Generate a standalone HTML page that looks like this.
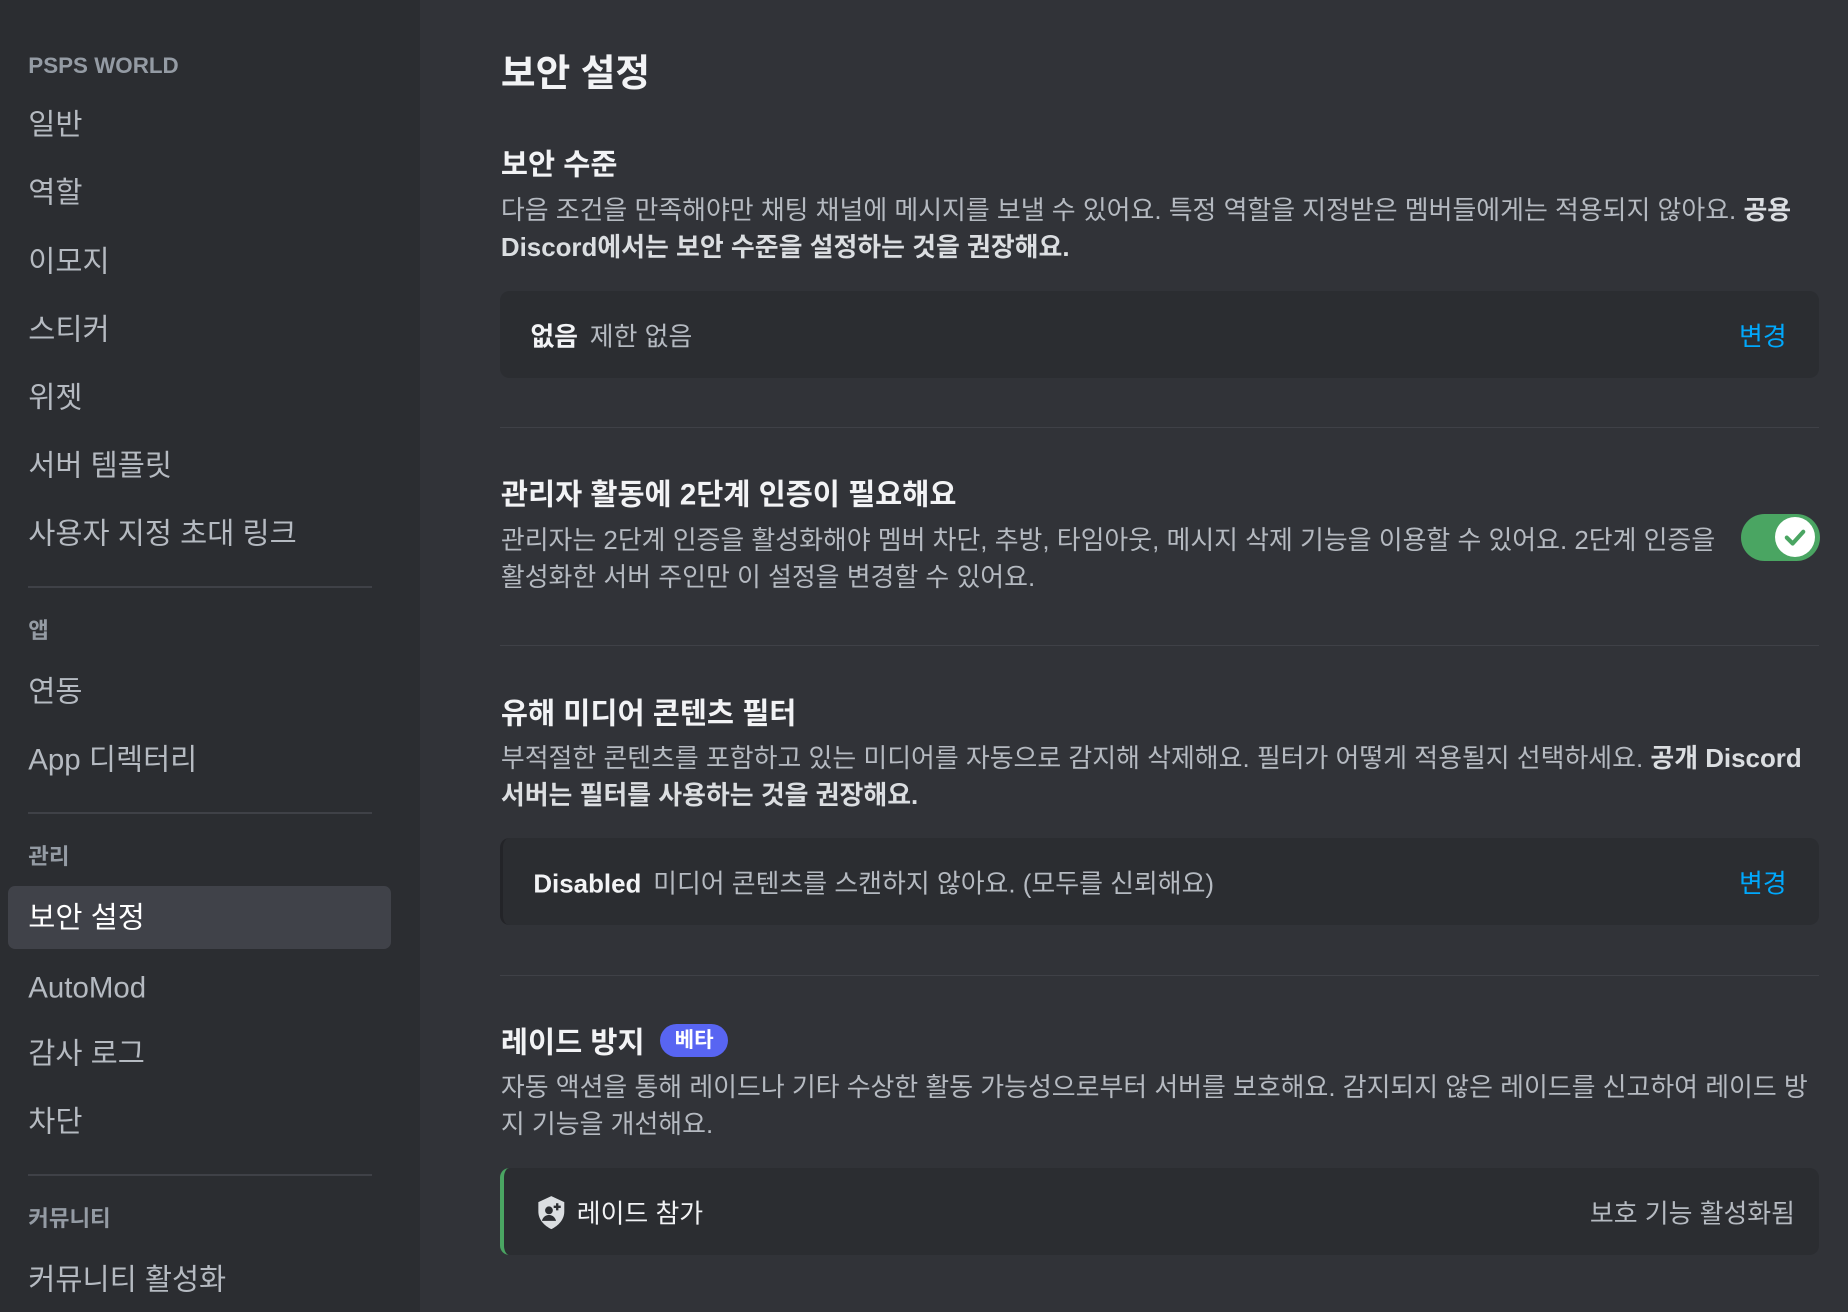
<!DOCTYPE html>
<html><head><meta charset="utf-8"><style>
html,body{margin:0;padding:0;width:1848px;height:1312px;overflow:hidden;background:#313338}
#w{zoom:1.17857;width:1568px;height:1114px;position:relative;font-family:"Liberation Sans","Noto Sans CJK KR",sans-serif;}
.sb{position:absolute;left:0;top:0;width:356px;height:1114px;background:#2b2d31}
.h{position:absolute;left:24px;font-size:19px;font-weight:700;color:#949ba4;line-height:1;transform:translateY(-50%)}
.it{position:absolute;left:24px;font-size:25px;color:#b5bac1;line-height:1;transform:translateY(-50%);margin-top:2px}
.sep{position:absolute;left:24px;width:292px;height:2px;background:#3f4147}
.sel{position:absolute;left:7px;top:752px;width:325px;height:53px;background:#404249;border-radius:6px}
.m{position:absolute;left:425px;color:#f2f3f5;line-height:1;transform:translateY(-50%);white-space:nowrap;margin-top:2px}
.d{position:absolute;left:425px;width:1110px;font-size:22px;color:#b5bac1;line-height:31px}
.d b{color:#dbdee1;font-weight:700}
.box{position:absolute;left:424px;width:1119px;height:74px;background:#2b2d31;border-radius:8px;box-sizing:border-box}
.box .l{position:absolute;left:26px;top:50%;transform:translateY(-50%);font-size:22px;color:#b5bac1;white-space:nowrap}
.box .l b{color:#f2f3f5;margin-right:10px}
.box .r{position:absolute;right:27px;top:50%;transform:translateY(-50%);font-size:22px;color:#00a8fc}
.hr{position:absolute;left:424px;width:1119px;height:1px;background:#3f4147}
</style></head><body><div id="w">
<div class="sb">
<div class="h" style="top:56px">PSPS WORLD</div>
<div class="it" style="top:104px">일반</div>
<div class="it" style="top:162px">역할</div>
<div class="it" style="top:220px">이모지</div>
<div class="it" style="top:278px">스티커</div>
<div class="it" style="top:336px">위젯</div>
<div class="it" style="top:393px">서버 템플릿</div>
<div class="it" style="top:451px">사용자 지정 초대 링크</div>
<div class="sep" style="top:497px"></div>
<div class="h" style="top:535px">앱</div>
<div class="it" style="top:585px">연동</div>
<div class="it" style="top:643px">App 디렉터리</div>
<div class="sep" style="top:689px"></div>
<div class="h" style="top:727px">관리</div>
<div class="sel"></div>
<div class="it" style="top:777px;color:#fff">보안 설정</div>
<div class="it" style="top:836px">AutoMod</div>
<div class="it" style="top:892px">감사 로그</div>
<div class="it" style="top:950px">차단</div>
<div class="sep" style="top:996px"></div>
<div class="h" style="top:1034px">커뮤니티</div>
<div class="it" style="top:1084px">커뮤니티 활성화</div>
</div>

<div class="m" style="top:61px;font-size:32px;font-weight:700">보안 설정</div>
<div class="m" style="top:138px;font-size:25px;font-weight:700">보안 수준</div>
<div class="d" style="top:164px">다음 조건을 만족해야만 채팅 채널에 메시지를 보낼 수 있어요. 특정 역할을 지정받은 멤버들에게는 적용되지 않아요. <b>공용 Discord에서는 보안 수준을 설정하는 것을 권장해요.</b></div>
<div class="box" style="top:247px"><div class="l"><b>없음</b>제한 없음</div><div class="r">변경</div></div>
<div class="hr" style="top:362px"></div>

<div class="m" style="top:418px;font-size:25px;font-weight:700">관리자 활동에 2단계 인증이 필요해요</div>
<div class="d" style="top:444px;width:1040px">관리자는 2단계 인증을 활성화해야 멤버 차단, 추방, 타임아웃, 메시지 삭제 기능을 이용할 수 있어요. 2단계 인증을 활성화한 서버 주인만 이 설정을 변경할 수 있어요.</div>
<div style="position:absolute;left:1477px;top:436px;width:67px;height:40px;border-radius:20px;background:#4aa562">
<div style="position:absolute;right:4px;top:3px;width:34px;height:34px;border-radius:50%;background:#fff">
<svg width="34" height="34" viewBox="0 0 34 34"><path d="M10 17.5l5 5 9-10" fill="none" stroke="#4aa562" stroke-width="3.5" stroke-linecap="round" stroke-linejoin="round"/></svg></div></div>
<div class="hr" style="top:547px"></div>

<div class="m" style="top:604px;font-size:25px;font-weight:700">유해 미디어 콘텐츠 필터</div>
<div class="d" style="top:629px">부적절한 콘텐츠를 포함하고 있는 미디어를 자동으로 감지해 삭제해요. 필터가 어떻게 적용될지 선택하세요. <b>공개 Discord 서버는 필터를 사용하는 것을 권장해요.</b></div>
<div class="box" style="top:711px;border-left:3px solid #232428"><div class="l"><b>Disabled</b>미디어 콘텐츠를 스캔하지 않아요. (모두를 신뢰해요)</div><div class="r">변경</div></div>
<div class="hr" style="top:827px"></div>

<div class="m" style="top:883px;font-size:25px;font-weight:700">레이드 방지</div>
<div style="position:absolute;left:560px;top:869px;width:58px;height:28px;border-radius:14px;background:#5865f2;color:#fff;font-size:18px;font-weight:700;text-align:center;line-height:28px">베타</div>
<div class="d" style="top:908px">자동 액션을 통해 레이드나 기타 수상한 활동 가능성으로부터 서버를 보호해요. 감지되지 않은 레이드를 신고하여 레이드 방지 기능을 개선해요.</div>
<div class="box" style="top:991px;border-left:4px solid #4aa562">
<svg style="position:absolute;left:27px;top:23px" width="26" height="30" viewBox="0 0 26 30"><path d="M13 1L24 6v8c0 7-5 12-11 15C7 26 2 21 2 14V6z" fill="#dbdee1"/><circle cx="11" cy="13" r="3.3" fill="#2b2d31"/><path d="M5 22c1-4 4-5 6-5s5 1 6 5z" fill="#2b2d31"/><path d="M18 7v6M15 10h6" stroke="#2b2d31" stroke-width="2"/></svg>
<div class="l" style="left:62px;color:#f2f3f5">레이드 참가</div>
<div class="r" style="right:20px;color:#b5bac1">보호 기능 활성화됨</div></div>
</div></body></html>
